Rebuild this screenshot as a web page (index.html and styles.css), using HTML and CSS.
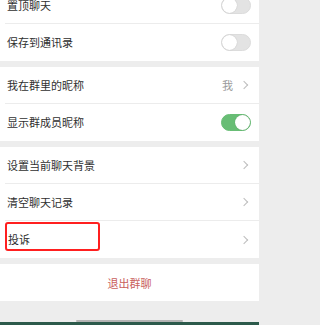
FILE: index.html
```html
<!DOCTYPE html>
<html lang="zh">
<head>
<meta charset="utf-8">
<link rel="stylesheet" href="styles.css">
</head>
<body>
<div class="screen">
  <div class="page">
    <div class="section">
      <div class="row"><span class="label">置顶聊天</span><span class="toggle"></span></div>
      <div class="row last"><span class="label">保存到通讯录</span><span class="toggle"></span></div>
    </div>
    <div class="section">
      <div class="row"><span class="label">我在群里的昵称</span><span class="right"><span class="value">我</span><span class="chev"></span></span></div>
      <div class="row last"><span class="label">显示群成员昵称</span><span class="toggle on"></span></div>
    </div>
    <div class="section">
      <div class="row"><span class="label">设置当前聊天背景</span><span class="chev"></span></div>
      <div class="row"><span class="label">清空聊天记录</span><span class="chev"></span></div>
      <div class="row last report"><span class="label">投诉</span><span class="chev"></span><span class="highlight"></span></div>
    </div>
    <div class="section">
      <div class="row last exit"><span class="exit-label">退出群聊</span></div>
    </div>
  </div>
  <div class="footer"><span class="home-bar"></span></div>
  <div class="nav-strip"></div>
</div>
</body>
</html>
```
FILE: styles.css
```css
html, body {
  margin: 0;
  padding: 0;
  background: #ededed;
}
body {
  font-family: "Noto Sans CJK SC", "Noto Sans", sans-serif;
  font-size: 11px;
  color: #2f2f2f;
  overflow: hidden;
}
.screen {
  width: 259px;
  height: 325px;
  overflow: hidden;
  background: #ededed;
}
.page {
  margin-top: -13px;
  display: flex;
  flex-direction: column;
  gap: 6px;
}
.section {
  background: #ffffff;
}
.row {
  position: relative;
  height: 37px;
  box-sizing: border-box;
  margin-left: 5px;
  padding-left: 2px;
  padding-right: 8px;
  display: flex;
  align-items: center;
  justify-content: space-between;
  border-bottom: 1px solid #ececec;
}
.row.last {
  border-bottom: none;
}
.label {
  line-height: 1;
}
.right {
  display: flex;
  align-items: center;
  gap: 8px;
}
.value {
  color: #9a9a9a;
}
.chev {
  width: 5px;
  height: 5px;
  border-top: 1px solid #bdbdbd;
  border-right: 1px solid #bdbdbd;
  transform: rotate(45deg);
  margin-right: 4px;
}
.toggle {
  position: relative;
  width: 30px;
  height: 17px;
  box-sizing: border-box;
  border-radius: 9px;
  background: #e3e3e3;
  border: 1px solid #dcdcdc;
}
.toggle::after {
  content: "";
  position: absolute;
  left: 0;
  top: 0;
  width: 15px;
  height: 15px;
  border-radius: 50%;
  background: #ffffff;
  box-shadow: 0 0 1px rgba(0,0,0,0.25);
}
.toggle.on {
  background: #68bd75;
  border-color: #68bd75;
}
.toggle.on::after {
  left: auto;
  right: 0;
}
.highlight {
  position: absolute;
  left: 0;
  top: 1px;
  width: 95px;
  height: 29px;
  box-sizing: border-box;
  border: 2px solid #ff1f1f;
  border-radius: 3px;
}
.report .label {
  margin-left: 1px;
}
.exit {
  justify-content: center;
  margin-left: 0;
  padding: 0;
}
.exit-label {
  color: #c9605c;
}
.footer {
  height: 21px;
  display: flex;
  justify-content: center;
  align-items: flex-end;
}
.home-bar {
  width: 107px;
  height: 2px;
  background: #b4b4b4;
  border-radius: 1px;
  margin-left: -1px;
}
.nav-strip {
  height: 3px;
  background: #2c5a4b;
}
```
